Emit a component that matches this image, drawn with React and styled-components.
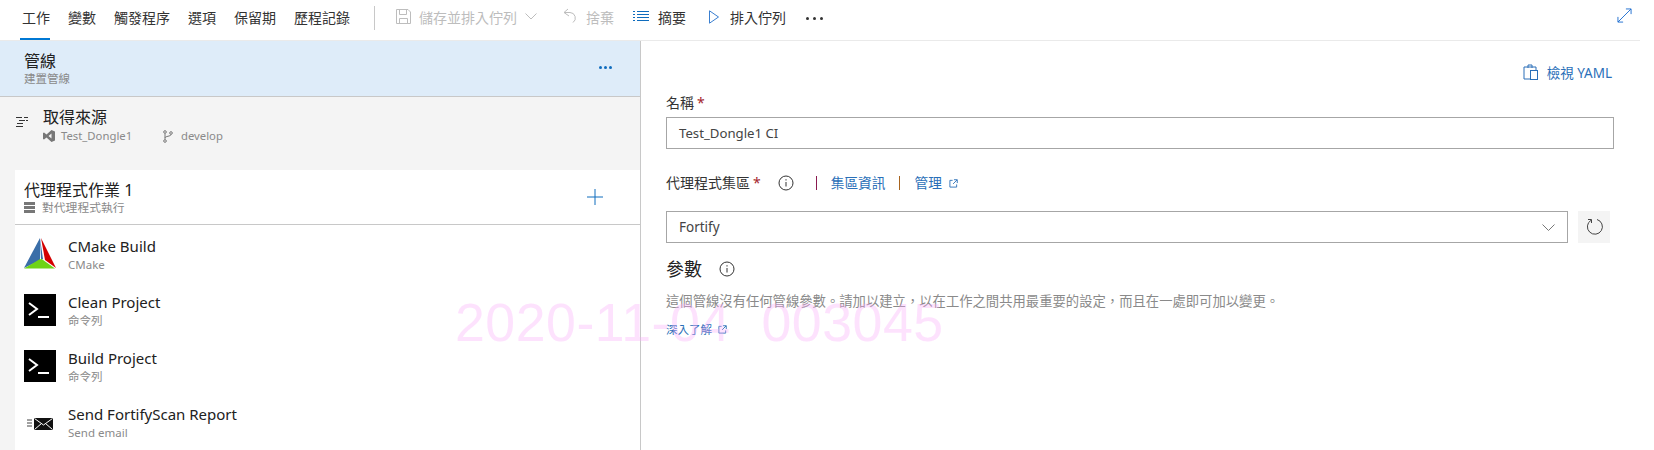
import React from "react";
import styled, { createGlobalStyle } from "styled-components";

const Global = createGlobalStyle`
  html, body { margin: 0; padding: 0; background: #fff; }
  body { font-family: "Noto Sans", "Noto Sans CJK TC", sans-serif; color: #212121; font-size: 14px; }
`;
const Page = styled.div`
  position: relative; width: 1654px; height: 450px; overflow: hidden; background: #fff;
`;
const Toolbar = styled.div`
  display: flex; align-items: center; height: 40px; border-bottom: 1px solid #eaeaea; width: 1640px; position: relative;
`;
const Tabs = styled.div`
  display: flex; padding-left: 20px; gap: 14px; align-items: center;
`;
const Tab = styled.div`
  position: relative; height: 40px; display: flex; align-items: center; padding: 0 2px 7px; box-sizing: border-box;
  font-size: 14px; color: #333;
  ${p => p.$active && `&::after { content: ""; position: absolute; left: 0; right: 2px; bottom: 0; height: 2px; background: #0078d4; }`}
`;
const Divider = styled.div`
  width: 1px; height: 24px; background: #c8c8c8; margin: 0 21px 4px 22px;
`;
const Command = styled.div`
  display: flex; align-items: center; gap: ${p => p.$gap ?? 9}px; font-size: 14px; color: ${p => (p.$off ? "#bdbdbd" : "#333")};
  width: ${p => p.$w}px; padding-bottom: 7px;
`;
const More = styled.div`
  display: flex; gap: 4px; padding-bottom: 4px;
  span { width: 3px; height: 3px; border-radius: 50%; background: #333; }
`;
const Expand = styled.div`
  position: absolute; right: 8px; top: 8px; width: 15px; height: 15px; color: #1f6fd0; display: flex;
`;
const Body = styled.div`
  display: flex; height: 409px;
`;
const Left = styled.div`
  width: 640px; background: #f4f4f4; border-right: 1px solid #c8c8c8; flex: none;
`;
const PipelineHead = styled.div`
  display: flex; align-items: center; justify-content: space-between; height: 55px; background: #deecf9;
  border-bottom: 1px solid #c8c8c8; padding: 0 28px 0 24px;
`;
const Titles = styled.div`
  display: flex; flex-direction: column;
`;
const Title = styled.div`
  font-size: 16px; line-height: 20px; color: #212121;
`;
const Sub = styled.div`
  font-size: ${p => p.$s || 11.5}px; line-height: 15px; color: #8a8a8a; display: flex; align-items: center; gap: ${p => p.$gap || 0}px;
`;
const Dots = styled.div`
  display: flex; gap: 2px; margin-bottom: 2px;
  span { width: 3px; height: 3px; border-radius: 50%; background: #0f6cbd; }
`;
const Source = styled.div`
  display: flex; height: 73px; padding: 10px 0 0 15px; box-sizing: border-box; gap: 14px; align-items: flex-start;
`;
const SourceIcon = styled.svg`
  width: 14px; height: 14px; margin-top: 7px; flex: none;
`;
const SourceMeta = styled.div`
  display: flex; align-items: center; margin-top: 1px;
`;
const MetaItem = styled.div`
  display: flex; align-items: center; gap: ${p => p.$gap || 6}px; font-size: 11.3px; line-height: 16px; color: #8a8a8a; width: ${p => p.$w}px;
`;
const Card = styled.div`
  background: #fff; margin-left: 15px; height: 280px; overflow: hidden;
`;
const CardHead = styled.div`
  display: flex; align-items: center; justify-content: space-between; height: 55px; border-bottom: 1px solid #c8c8c8;
  padding: 0 37px 0 9px; box-sizing: border-box;
`;
const Plus = styled.svg`
  width: 16px; height: 16px; color: #0f6cbd;
`;
const TaskList = styled.div`
  padding-top: 1px;
`;
const Task = styled.div`
  display: flex; align-items: center; height: 56px; padding-left: 9px; gap: 12px;
`;
const IconBox = styled.div`
  width: 32px; height: 32px; flex: none; display: flex; align-items: center; justify-content: center;
`;
const TaskText = styled(Titles)`
  margin-top: -1px;
`;
const TaskName = styled.div`
  font-size: 15px; line-height: 21px; color: #212121;
`;
const TaskSub = styled.div`
  font-size: 11.5px; line-height: 15px; color: #8a8a8a;
`;
const Right = styled.div`
  flex: 1; padding: 0 0 0 25px; display: flex; flex-direction: column; position: relative;
`;
const Yaml = styled.div`
  display: flex; align-items: center; justify-content: flex-end; gap: 9px; color: #2a6fb8; font-size: 13.5px;
  height: 20px; margin: 21px 42px 0 0;
`;
const Label = styled.div`
  font-size: 14px; line-height: 20px; color: #333; display: flex; align-items: center;
`;
const Req = styled.span`
  color: #a4262c; margin-left: 3px;
`;
const NameLabel = styled(Label)`
  margin-top: 11px;
`;
const Field = styled.div`
  box-sizing: border-box; height: 32px; border: 1px solid #a6a6a6; padding: 0 12px; display: flex; align-items: center;
  font-size: ${p => p.$s || 13.5}px; color: #444; width: ${p => p.$w}px; justify-content: space-between; background: #fff;
`;
const NameField = styled(Field)`
  margin-top: 4px;
`;
const PoolLabel = styled(Label)`
  margin-top: 24px; height: 20px;
`;
const Info = styled.svg`
  width: 16px; height: 16px; flex: none; color: #333; margin-left: ${p => p.$ml || 0}px;
`;
const Bar = styled.span`
  width: 1px; height: 14px; background: ${p => p.$c}; margin: 0 14px 0 ${p => p.$ml || 14}px;
`;
const A = styled.span`
  color: #2a6fb8; font-size: 13.7px; display: inline-flex; align-items: center; gap: 7px;
`;
const SelectRow = styled.div`
  display: flex; align-items: center; gap: 10px; margin-top: 18px;
`;
const Refresh = styled.div`
  width: 32px; height: 32px; background: #f4f4f4; display: flex; align-items: center; justify-content: center; margin-top: -1px;
`;
const ParamTitle = styled.div`
  display: flex; align-items: center; gap: 17px; font-size: 18px; line-height: 26px; color: #212121; margin-top: 13px;
`;
const Desc = styled.div`
  font-size: 13.33px; line-height: 18px; color: #8a8a8a; margin-top: 10px; white-space: nowrap;
`;
const Learn = styled(A)`
  margin-top: 11px; font-size: 11.5px; gap: 6px;
`;
const Watermark = styled.div`
  position: absolute; left: 455px; top: 289px; font-family: "Liberation Sans", sans-serif; font-size: 53.7px; line-height: 66px; letter-spacing: 0.5px;
  color: rgba(248, 170, 250, 0.34); white-space: pre; pointer-events: none;
`;

const Ext = () => (
  <svg width="9" height="9" viewBox="0 0 10 10" fill="none" stroke="#2a6fb8" strokeWidth="1">
    <path d="M4 1.500H1v7.500h7.500V6M5.500 .8h3.700v3.700M9 1L4.500 5.500" />
  </svg>
);
const InfoIcon = ({ ml }) => (
  <Info $ml={ml} viewBox="0 0 16 16" fill="none" stroke="currentColor">
    <circle cx="8" cy="8" r="7" />
    <path d="M8 7v4.500M8 4.200v1.300" />
  </Info>
);
const Cmake = () => (
  <svg width="32" height="32" viewBox="0 0 32 32">
    <path d="M16 0L0 30l19-9z" fill="#3a6ea8" />
    <path d="M17 0l15 30-11-8z" fill="#d40000" />
    <path d="M0 30.500l17-10 14 10z" fill="#6fd315" />
    <path d="M16 0l1 21-1 .5z" fill="#fff" />
  </svg>
);
const Terminal = () => (
  <svg width="32" height="32" viewBox="0 0 32 32">
    <rect width="32" height="32" fill="#000" />
    <path d="M5 9l8 6-8 6" fill="none" stroke="#fff" strokeWidth="2" />
    <path d="M14 23h11" stroke="#fff" strokeWidth="2" />
  </svg>
);
const Mail = () => (
  <svg width="28" height="14" viewBox="0 0 28 14" style={{ marginTop: 3 }}>
    <path d="M1 3h5M1 6h5M1 9h5" stroke="#444" strokeWidth="1" />
    <rect x="8" y="1" width="19" height="12" fill="#111" />
    <path d="M8.500 1.500l9 6.500 9-6.500M8.500 12.500l7-6M26.500 12.500l-7-6" fill="none" stroke="#fff" strokeWidth="1" />
  </svg>
);

const tasks = [
  ["CMake Build", "CMake", <Cmake />],
  ["Clean Project", "命令列", <Terminal />],
  ["Build Project", "命令列", <Terminal />],
  ["Send FortifyScan Report", "Send email", <Mail />],
];

export default function App() {
  return (
    <Page>
      <Global />
      <Toolbar>
        <Tabs>
          <Tab $active>工作</Tab>
          <Tab>變數</Tab>
          <Tab>觸發程序</Tab>
          <Tab>選項</Tab>
          <Tab>保留期</Tab>
          <Tab>歷程記錄</Tab>
        </Tabs>
        <Divider />
        <Command $off $w={166} $gap={8}>
          <svg width="15" height="15" viewBox="0 0 15 15" fill="none" stroke="#bdbdbd" style={{ flex: "none" }}><path d="M.5.5h11.500l2.500 2.500v11.500H.5zM3.500.5v5h7v-5M3.500 14.500v-5h8v5" /></svg>
          儲存並排入佇列
          <svg width="12" height="7" viewBox="0 0 12 7" fill="none" stroke="#bdbdbd" style={{ flex: "none" }}><path d="M.5.5L6 6l5.500-5.500" /></svg>
        </Command>
        <Command $off $w={71} $gap={9}>
          <svg width="15" height="17" viewBox="0 0 15 17" fill="none" stroke="#bdbdbd"><path d="M6 1L2 4.500l5 3.500M2 4.500h6a5.500 5.500 0 0 1 3 10" /></svg>
          捨棄
        </Command>
        <Command $w={76} $gap={9}>
          <svg width="16" height="11" viewBox="0 0 16 11" fill="none" stroke="#0f6cbd"><path d="M4 .5h12M4 3.500h12M4 6.500h12M4 9.500h12M0 .5h2M0 3.500h2M0 6.500h2M0 9.500h2" /></svg>
          摘要
        </Command>
        <Command $w={97} $gap={11}>
          <svg width="10" height="14" viewBox="0 0 10 14" fill="none" stroke="#3a7fd0"><path d="M.5.8l9 6.200-9 6.200z" /></svg>
          排入佇列
        </Command>
        <More><span /><span /><span /></More>
        <Expand>
          <svg width="15" height="15" viewBox="0 0 16 16" fill="none" stroke="currentColor"><path d="M1 15L15 1M9.500 1H15v5.500M1 9.500V15h5.500" /></svg>
        </Expand>
      </Toolbar>
      <Body>
        <Left>
          <PipelineHead>
            <Titles>
              <Title>管線</Title>
              <Sub>建置管線</Sub>
            </Titles>
            <Dots><span /><span /><span /></Dots>
          </PipelineHead>
          <Source>
            <SourceIcon viewBox="0 0 14 14" fill="none" stroke="#333"><path d="M1 3.500h6M9 3.500h4M4 6.500h6M11 6.500h2M2 9.500h6M1 12.500h7" /></SourceIcon>
            <Titles>
              <Title>取得來源</Title>
              <SourceMeta>
                <MetaItem $w={120}>
                  <svg width="12" height="12" viewBox="0 0 12 12" fill="#777"><path d="M8.500 0L12 1.500v9L8.500 12 3.500 7.500 1 9.500 0 9V3l1-.5 2.500 2zM8.500 3.500L5.500 6l3 2.500z" /></svg>
                  Test_Dongle1
                </MetaItem>
                <MetaItem $gap={8}>
                  <svg width="10" height="13" viewBox="0 0 10 13" fill="none" stroke="#777"><circle cx="2" cy="2" r="1.300" /><circle cx="2" cy="11" r="1.300" /><circle cx="8" cy="3" r="1.300" /><path d="M2 3.500v6M2 8c0-2 6-1.500 6-3.500" /></svg>
                  develop
                </MetaItem>
              </SourceMeta>
            </Titles>
          </Source>
          <Card>
            <CardHead>
              <Titles>
                <Title>代理程式作業 1</Title>
                <Sub $gap={7} $s={11.8}>
                  <svg width="11" height="11" viewBox="0 0 11 11" fill="#777"><path d="M0 0h11v3H0zM0 4h11v3H0zM0 8h11v3H0z" /></svg>
                  對代理程式執行
                </Sub>
              </Titles>
              <Plus viewBox="0 0 16 16" fill="none" stroke="currentColor"><path d="M8 0v16M0 8h16" /></Plus>
            </CardHead>
            <TaskList>
              {tasks.map(([n, s, i]) => (
                <Task key={n}>
                  <IconBox>{i}</IconBox>
                  <TaskText>
                    <TaskName>{n}</TaskName>
                    <TaskSub>{s}</TaskSub>
                  </TaskText>
                </Task>
              ))}
            </TaskList>
          </Card>
        </Left>
        <Right>
          <Yaml>
            <svg width="15" height="16" viewBox="0 0 15 16" fill="none" stroke="#2a6fb8"><path d="M5 4V1h4v3M1 3h12v3M1 3v12h6" /><rect x="7.500" y="6.500" width="7" height="9" /></svg>
            檢視 YAML
          </Yaml>
          <NameLabel>名稱<Req>*</Req></NameLabel>
          <NameField $w={948} $s={13.2}>Test_Dongle1 CI</NameField>
          <PoolLabel>
            代理程式集區<Req>*</Req>
            <InfoIcon ml={17} />
            <Bar $c="#8a1a50" $ml={22} />
            <A>集區資訊</A>
            <Bar $c="#a8641e" />
            <A>管理<Ext /></A>
          </PoolLabel>
          <SelectRow>
            <Field $w={902}>
              Fortify
              <svg width="13" height="7" viewBox="0 0 13 7" fill="none" stroke="#777"><path d="M.5.5l6 6 6-6" /></svg>
            </Field>
            <Refresh>
              <svg width="17" height="17" viewBox="0 0 17 17" fill="none" stroke="#444"><path d="M5 2.300A7.500 7.500 0 1 0 11 1.500M2 1.500h3.500V5" /></svg>
            </Refresh>
          </SelectRow>
          <ParamTitle>參數<InfoIcon /></ParamTitle>
          <Desc>這個管線沒有任何管線參數。請加以建立，以在工作之間共用最重要的設定，而且在一處即可加以變更。</Desc>
          <div><Learn>深入了解<Ext /></Learn></div>
        </Right>
      </Body>
      <Watermark>2020-11-04  003045</Watermark>
    </Page>
  );
}
